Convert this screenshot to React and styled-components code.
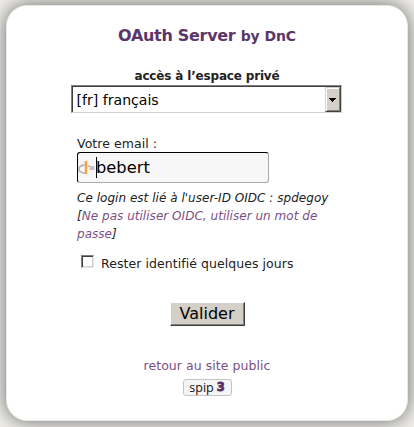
import React from "react";
import styled, { createGlobalStyle } from "styled-components";

const Global = createGlobalStyle`
  * { box-sizing: border-box; }
  body {
    margin: 0;
    background: #f1f0eb;
    color: #222;
    font-family: Verdana, "DejaVu Sans", sans-serif;
    overflow: hidden;
  }
`;

const Page = styled.main`
  height: 427px;
  padding: 5px 6px 6px;
`;

const Card = styled.section`
  width: 402px;
  height: 416px;
  padding: 20px 65px 0;
  border: 1px solid #e8e8e8;
  border-radius: 21px;
  background: #fff;
  box-shadow: 0 0 20px #666;
  display: flex;
  flex-direction: column;
  align-items: center;
`;

const Title = styled.h1`
  margin: 0;
  height: 20px;
  font-size: 16px;
  line-height: 19px;
  letter-spacing: -0.3px;
  white-space: nowrap;
  color: #5b3668;
`;

const TitleSmall = styled.span`
  font-size: 14px;
  letter-spacing: -0.1px;
`;

const Subtitle = styled.h2`
  margin: 21px 0 0;
  font-size: 12px;
  line-height: 18px;
  letter-spacing: -0.17px;
  white-space: nowrap;
`;

const LanguageSelect = styled.div`
  display: flex;
  width: 271px;
  height: 28px;
  margin-right: 2px;
  border: 1px solid;
  border-color: #808080 #d4d0c8 #d4d0c8 #808080;
  box-shadow: inset 1px 1px #404040, inset -1px 0 #404040;
  padding: 1px 1px 0 1px;
  color: #000;
`;

const SelectValue = styled.span`
  flex: 1;
  padding-left: 4px;
  font-size: 14.1px;
  line-height: 26px;
`;

const SelectArrow = styled.span`
  width: 15px;
  height: 25px;
  display: grid;
  place-items: center;
  background: #d4d0c8;
  border: 1px solid;
  border-color: #d4d0c8 #808080 #404040 #d4d0c8;
  box-shadow: inset 1px 1px #fff, inset 0 -1px #808080;
`;

const Form = styled.div`
  width: 258px;
  margin: 22px 2px 0 0;
  display: flex;
  flex-direction: column;
`;

const Label = styled.label`
  font-size: 12.5px;
  line-height: 17px;
  letter-spacing: 0.06px;
  white-space: nowrap;
`;

const EmailField = styled.div`
  display: flex;
  align-items: center;
  width: 192px;
  height: 31px;
  border: 1px solid;
  border-color: #000 #aaa #aaa #000;
  border-radius: 3px;
  background: #f7f7f7;
  color: #000;
  font-size: 16.3px;
`;

const Caret = styled.span`
  width: 1px;
  height: 21px;
  margin-right: -1px;
  background: #000;
`;

const Explanation = styled.p`
  margin: 6px 0 0;
  font-size: 12px;
  line-height: 18px;
  letter-spacing: 0.03px;
  font-style: italic;
  white-space: nowrap;
`;

const Line = styled.span`
  display: block;
`;

const Link = styled.a`
  color: #7b4f86;
`;

const Remember = styled.div`
  display: flex;
  align-items: center;
  gap: 7px;
  margin-top: 11px;
  padding-left: 4px;
  height: 18px;
`;

const Checkbox = styled.span`
  width: 13px;
  height: 13px;
  margin-bottom: 4px;
  border: 1px solid;
  border-color: #808080 #eae8e4 #eae8e4 #808080;
  box-shadow: inset 1px 1px #404040, inset -1px -1px #d4d0c8;
`;

const Submit = styled.button`
  width: 75px;
  height: 24px;
  margin: 30px 0 0;
  padding: 0;
  border: 1px solid;
  border-color: #fff #404040 #404040 #fff;
  box-shadow: inset -1px -1px #808080;
  background: #d4d0c8;
  color: #000;
  font-family: inherit;
  font-size: 16px;
  line-height: 20px;
`;

const BackLink = styled(Link)`
  margin-top: 31px;
  font-size: 12.5px;
  line-height: 18px;
  letter-spacing: 0.05px;
  white-space: nowrap;
`;

const Badge = styled.div`
  display: flex;
  align-items: center;
  justify-content: center;
  gap: 3px;
  width: 49px;
  height: 17px;
  margin-top: 4px;
  border: 1px solid #c4c4c4;
  border-radius: 3px;
  background: #f5f5f5;
  color: #111;
  font-family: "Open Sans", sans-serif;
  font-size: 12.5px;
  line-height: 13px;
`;

const BadgeNumber = styled.b`
  color: #5b2d69;
  font-family: "DejaVu Sans", sans-serif;
  font-size: 11.5px;
  -webkit-text-stroke: 0.8px #5b2d69;
`;

function OpenIdIcon() {
  return (
    <svg width="18" height="20" viewBox="0 0 18 20" fill="none">
      <path d="M6.5 7C3 7.4 1 9 1 11.2c0 2 2.4 3.6 6 3.9" stroke="#b8b8b8" strokeWidth="1.8" />
      <path d="M10 8c2 .1 3.4.9 4.6 1.9M15.5 8v3h-4" stroke="#b8b8b8" strokeWidth="1.4" />
      <path d="M8 3v13" stroke="#ff9f38" strokeWidth="2.4" />
    </svg>
  );
}

export default function App() {
  return (
    <Page>
      <Global />
      <Card>
        <Title>OAuth Server <TitleSmall>by DnC</TitleSmall></Title>
        <Subtitle>accès à l’espace privé</Subtitle>
        <LanguageSelect>
          <SelectValue>[fr] français</SelectValue>
          <SelectArrow>
            <svg width="7" height="4" shapeRendering="crispEdges"><path d="M0 0h7L3.5 4z" fill="#000" /></svg>
          </SelectArrow>
        </LanguageSelect>
        <Form>
          <Label>Votre email :</Label>
          <EmailField><OpenIdIcon /><Caret />bebert</EmailField>
          <Explanation>
            <Line>Ce login est lié à l'user-ID OIDC : spdegoy</Line>
            <Line>[<Link>Ne pas utiliser OIDC, utiliser un mot de</Link></Line>
            <Line><Link>passe</Link>]</Line>
          </Explanation>
          <Remember>
            <Checkbox />
            <Label>Rester identifié quelques jours</Label>
          </Remember>
        </Form>
        <Submit>Valider</Submit>
        <BackLink>retour au site public</BackLink>
        <Badge>spip <BadgeNumber>3</BadgeNumber></Badge>
      </Card>
    </Page>
  );
}
